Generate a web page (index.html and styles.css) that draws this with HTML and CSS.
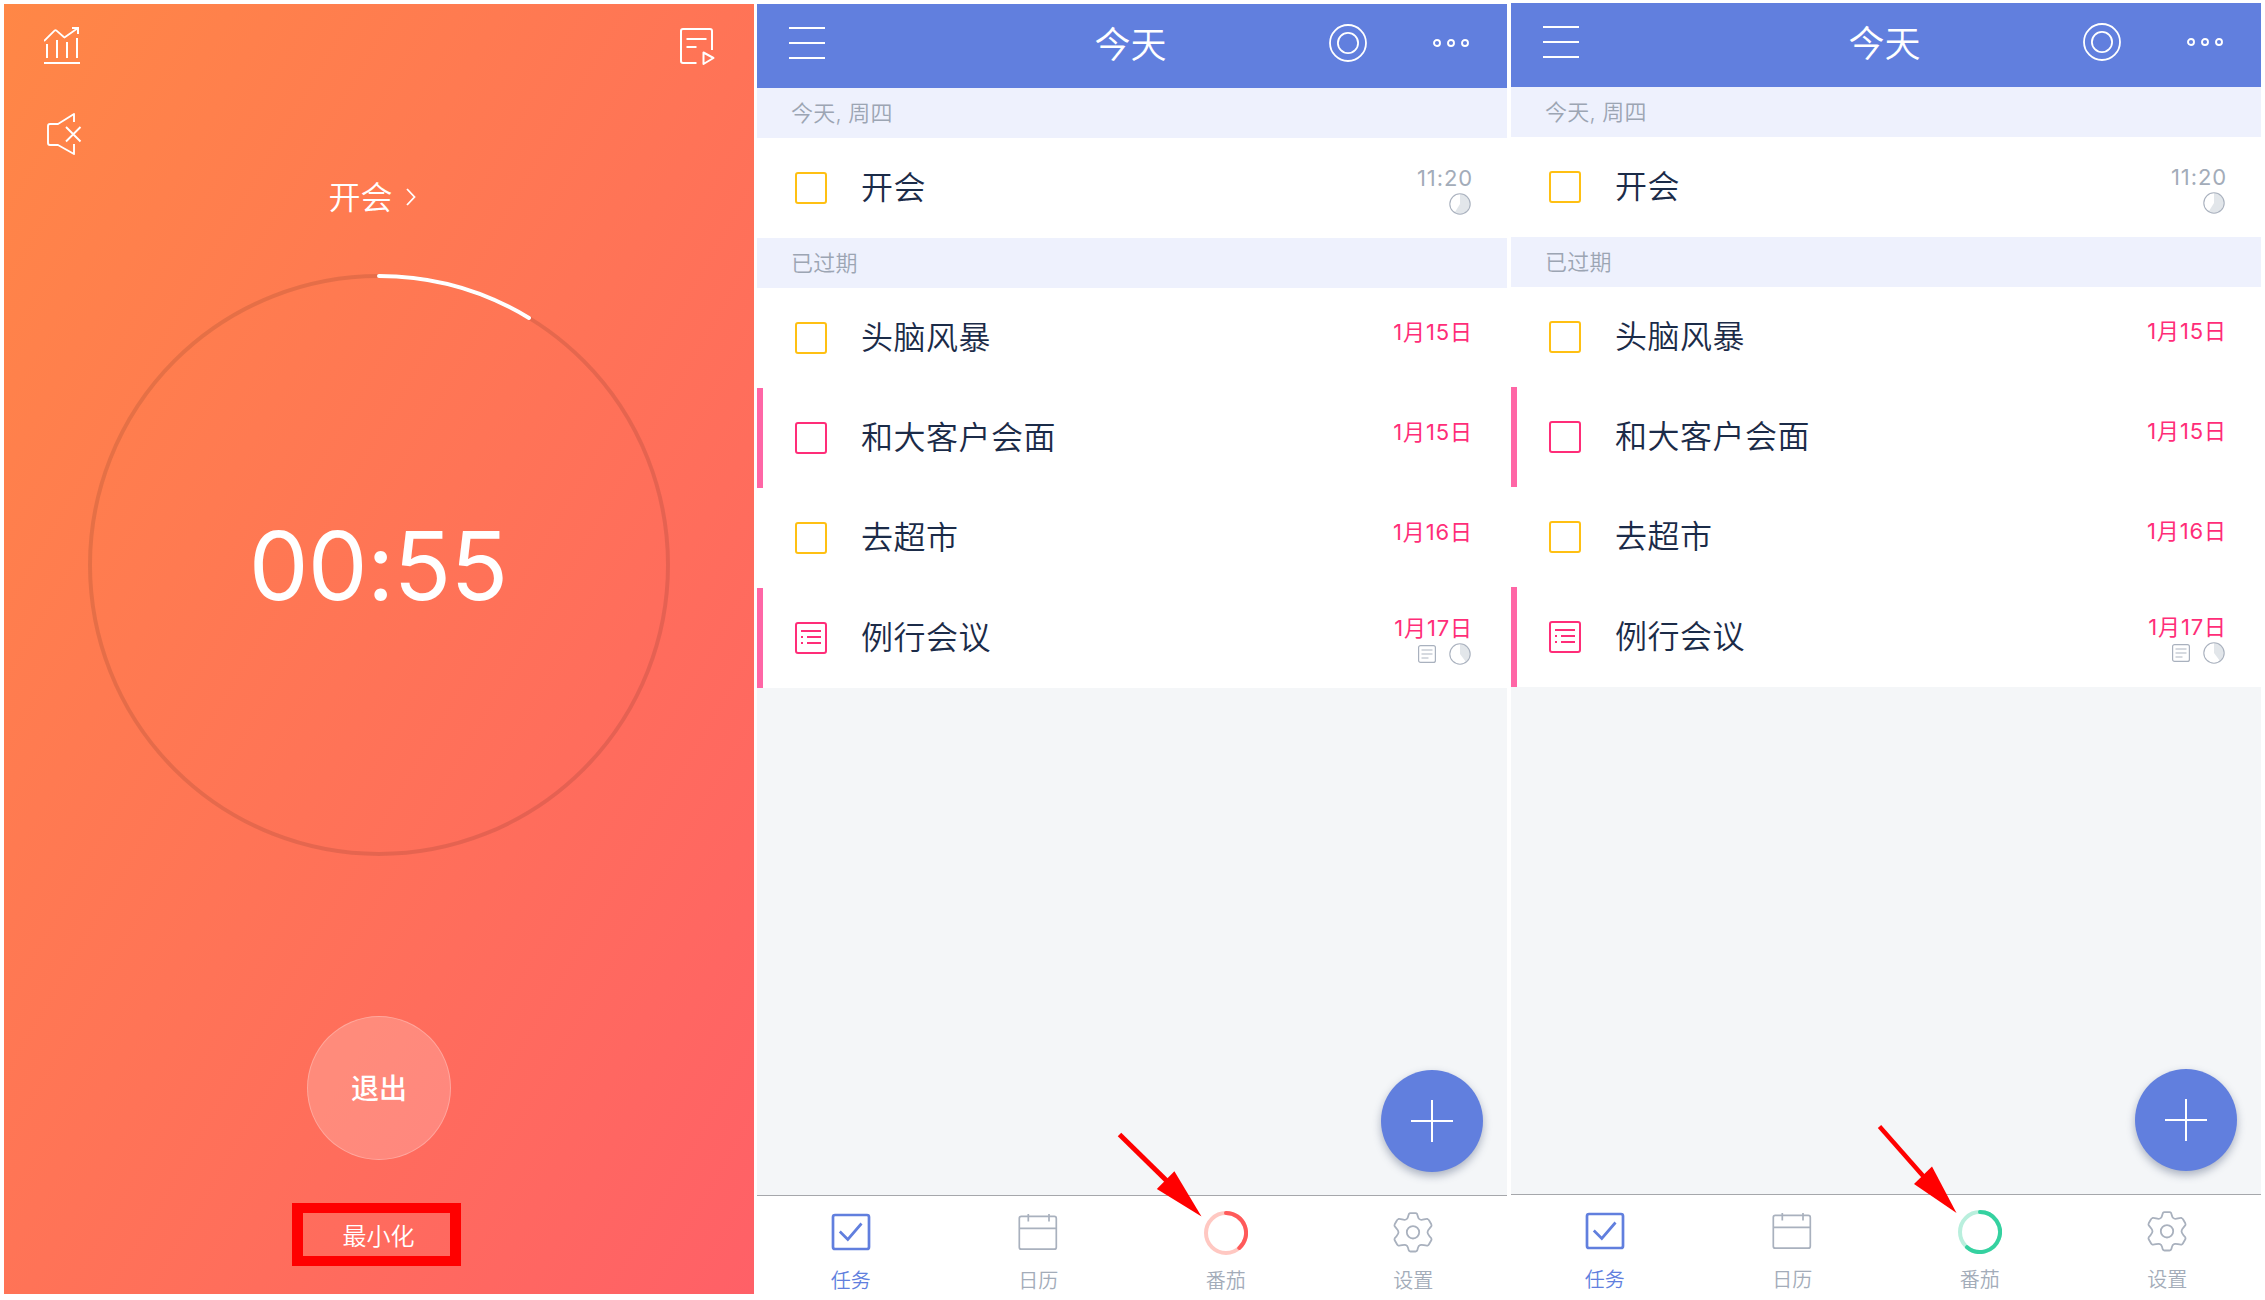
FILE: index.html
```html
<!DOCTYPE html>
<html lang="zh-CN">
<head>
<meta charset="utf-8">
<title>今天</title>
<link rel="stylesheet" href="styles.css">
</head>
<body>
<svg class="defs" width="0" height="0">
  <defs>
    <symbol id="menu" viewBox="0 0 36 32"><path d="M0 1h36M0 16h36M0 31h36" stroke="#fff" stroke-width="2"/></symbol>
    <symbol id="target" viewBox="0 0 38 38"><g fill="none" stroke="#fff" stroke-width="1.8"><circle cx="19" cy="19" r="18"/><circle cx="19" cy="19" r="10.1"/></g></symbol>
    <symbol id="more" viewBox="0 0 36 8"><g fill="none" stroke="#fff" stroke-width="1.9"><circle cx="4" cy="4" r="3"/><circle cx="18" cy="4" r="3"/><circle cx="32" cy="4" r="3"/></g></symbol>
    <symbol id="pie-60" viewBox="0 0 22 22"><path d="M11 11V1a10 10 0 1 1-5.3 18.5z" fill="#e2e6ea"/><circle cx="11" cy="11" r="10.2" fill="none" stroke="#a9b1be" stroke-width="1.1"/></symbol>
    <symbol id="pie-40" viewBox="0 0 22 22"><path d="M11 11V1a10 10 0 0 1 6 18z" fill="#e2e6ea"/><circle cx="11" cy="11" r="10.2" fill="none" stroke="#a9b1be" stroke-width="1.1"/></symbol>
    <symbol id="note" viewBox="0 0 18 18"><rect x=".6" y=".6" width="16.8" height="16.8" rx="2" fill="none" stroke="#a9b1be" stroke-width="1.2"/><path d="M3.500 5h11M3.500 9h11M3.500 13h7" stroke="#c9ced6" stroke-width="1.600"/></symbol>
    <symbol id="checklist" viewBox="0 0 32 32"><path d="M6 9h20M6 15h2M12 15h14M6 21h2M12 21h14" stroke="#ff2d78" stroke-width="2"/></symbol>
    <symbol id="plus" viewBox="0 0 42 42"><path d="M21 0v42M0 21h42" stroke="#fff" stroke-width="2"/></symbol>
    <symbol id="task" viewBox="0 0 44 44"><rect x="4" y="4" width="36" height="34" rx="2" fill="none" stroke="#617fde" stroke-width="2.700"/><path d="M10.800 20.500l8 8L32.500 12.500" fill="none" stroke="#617fde" stroke-width="2.700"/></symbol>
    <symbol id="calendar" viewBox="0 0 44 44"><g fill="none" stroke="#a9b1be" stroke-width="1.700"><rect x="3.300" y="5.400" width="37" height="32.800" rx="2"/><path d="M3.300 17.400h37M12.300 3V10.500M33 3V10.500"/></g></symbol>
    <symbol id="gear" viewBox="0 0 44 44"><g transform="translate(0 -.7)" fill="none" stroke="#a9b1be" stroke-width="1.800" stroke-linejoin="round"><circle cx="22" cy="22" r="6.200"/><path d="M18 3.500Q18.500 2.800 19.500 2.800h5Q25.500 2.800 26 3.500C27.500 6.500 26.500 8.500 29 9.200C31.500 10.300 33.500 8.300 36.500 8.700Q37.500 9 38 10L40.300 14Q40.800 15 40.300 16C38.500 18.500 36.500 19.500 36.500 22S38.500 25.500 40.300 28Q40.800 29 40.300 30L38 34Q37.500 35 36.500 35.300C33.500 35.700 31.500 33.700 29 34.800C26.500 35.500 27.500 37.500 26 40.500Q25.500 41.200 24.500 41.200h-5Q18.500 41.200 18 40.500C16.500 37.500 17.500 35.500 15 34.800C12.500 33.700 10.500 35.700 7.500 35.300Q6.500 35 6 34L3.700 30Q3.200 29 3.700 28C5.500 25.500 7.500 24.500 7.500 22S5.500 18.500 3.700 16Q3.200 15 3.700 14L6 10Q6.500 9 7.500 8.700C10.500 8.300 12.500 10.300 15 9.200C17.500 8.500 16.500 6.500 18 3.500Z"/></g></symbol>
  </defs>
</svg>

<main class="board">
  <section class="timer">
    <div class="timer-top">
      <div class="timer-left">
        <svg width="36" height="40" viewBox="0 0 36 40" fill="none" stroke="#fff" stroke-width="2"><path d="M0 37h36M3 18v14M13 14v18M23 16v16M33 12v20M28 2h6v6"/><path d="M0 15L10.500 4.700Q11.500 3.800 12.500 4.700L19.500 10.800 20.500 11.500 21.500 10.800 34 2" stroke-width="1.800"/></svg>
        <svg class="mute" width="36" height="44" viewBox="0 0 36 44" fill="none" stroke="#fff" stroke-width="1.900" stroke-linejoin="round"><path d="M28 10V2L12 12H4Q2 12 2 14V31Q2 33 4 33H12L28 42V32"/><path d="M20 15L34.500 29.500M34.500 15L20 29.500"/></svg>
      </div>
      <svg class="log" width="36" height="38" viewBox="0 0 36 38" fill="none" stroke="#fff" stroke-width="2" stroke-linejoin="round"><path d="M33 23V4Q33 2 31 2H4Q2 2 2 4V34Q2 36 4 36H17.500"/><path d="M7.500 12H27.500M7.500 20H17.500M24.500 25.500V37L34.500 31Z"/></svg>
    </div>
    <div class="timer-task"><span>开会</span><svg width="10" height="18" viewBox="0 0 10 18" fill="none" stroke="#fff" stroke-width="1.800"><path d="M1 1l7.500 8L1 17"/></svg></div>
    <div class="dial">
      <svg width="582" height="582" viewBox="0 0 582 582" fill="none"><circle cx="291" cy="291" r="289" stroke="#000" stroke-opacity=".1" stroke-width="4"/><path d="M291 2A289 289 0 0 1 441 44" stroke="#fff" stroke-width="4" stroke-linecap="round"/></svg>
      <span class="clock">00:55</span>
    </div>
    <div class="quit">退出</div>
    <div class="minimize">最小化</div>
  </section>

  <section class="phone">
    <header class="bar"><svg width="36" height="32"><use href="#menu"/></svg><h1>今天</h1><div class="actions"><svg width="38" height="38"><use href="#target"/></svg><svg width="36" height="8"><use href="#more"/></svg></div></header>
    <div class="group">今天, 周四</div>
    <div class="row"><i class="box"></i><span class="name">开会</span><div class="meta time"><span>11:20</span><div class="marks"><svg width="22" height="22"><use href="#pie-60"/></svg></div></div></div>
    <div class="group">已过期</div>
    <div class="row"><i class="box"></i><span class="name">头脑风暴</span><div class="meta"><span>1月15日</span></div></div>
    <div class="row marked"><i class="box high"></i><span class="name">和大客户会面</span><div class="meta"><span>1月15日</span></div></div>
    <div class="row"><i class="box"></i><span class="name">去超市</span><div class="meta"><span>1月16日</span></div></div>
    <div class="row marked"><i class="box high"><svg width="32" height="32"><use href="#checklist"/></svg></i><span class="name">例行会议</span><div class="meta with-marks"><span>1月17日</span><div class="marks"><svg width="18" height="18"><use href="#note"/></svg><svg width="22" height="22"><use href="#pie-40"/></svg></div></div></div>
    <div class="rest"></div>
    <nav class="tabs">
      <div class="tab active"><svg width="44" height="44"><use href="#task"/></svg><span>任务</span></div>
      <div class="tab"><svg width="44" height="44"><use href="#calendar"/></svg><span>日历</span></div>
      <div class="tab"><svg width="44" height="44" viewBox="0 0 44 44" fill="none" stroke-width="4"><circle cx="22" cy="22" r="20" stroke="#ffc8c2"/><path d="M22 2A20 20 0 0 1 35.300 37" stroke="#ff5a5a" stroke-linecap="round"/></svg><span>番茄</span></div>
      <div class="tab"><svg width="44" height="44"><use href="#gear"/></svg><span>设置</span></div>
    </nav>
    <div class="add"><svg width="42" height="42"><use href="#plus"/></svg></div>
    <svg class="arrow" width="86" height="86" viewBox="0 0 86 86"><path d="M2.500 2.500L53 52" stroke="#f00" stroke-width="5"/><path d="M84.500 84.500L57.400 39.300 39.800 57z" fill="#f00"/></svg>
  </section>

  <section class="phone raised">
    <header class="bar"><svg width="36" height="32"><use href="#menu"/></svg><h1>今天</h1><div class="actions"><svg width="38" height="38"><use href="#target"/></svg><svg width="36" height="8"><use href="#more"/></svg></div></header>
    <div class="group">今天, 周四</div>
    <div class="row"><i class="box"></i><span class="name">开会</span><div class="meta time"><span>11:20</span><div class="marks"><svg width="22" height="22"><use href="#pie-60"/></svg></div></div></div>
    <div class="group">已过期</div>
    <div class="row"><i class="box"></i><span class="name">头脑风暴</span><div class="meta"><span>1月15日</span></div></div>
    <div class="row marked"><i class="box high"></i><span class="name">和大客户会面</span><div class="meta"><span>1月15日</span></div></div>
    <div class="row"><i class="box"></i><span class="name">去超市</span><div class="meta"><span>1月16日</span></div></div>
    <div class="row marked"><i class="box high"><svg width="32" height="32"><use href="#checklist"/></svg></i><span class="name">例行会议</span><div class="meta with-marks"><span>1月17日</span><div class="marks"><svg width="18" height="18"><use href="#note"/></svg><svg width="22" height="22"><use href="#pie-40"/></svg></div></div></div>
    <div class="rest"></div>
    <nav class="tabs">
      <div class="tab active"><svg width="44" height="44"><use href="#task"/></svg><span>任务</span></div>
      <div class="tab"><svg width="44" height="44"><use href="#calendar"/></svg><span>日历</span></div>
      <div class="tab"><svg width="44" height="44" viewBox="0 0 44 44" fill="none" stroke-width="4"><circle cx="22" cy="22" r="20" stroke="#b9efdd"/><path d="M22 2A20 20 0 1 1 9 37.200" stroke="#35d1a0" stroke-linecap="round"/></svg><span>番茄</span></div>
      <div class="tab"><svg width="44" height="44"><use href="#gear"/></svg><span>设置</span></div>
    </nav>
    <div class="add"><svg width="42" height="42"><use href="#plus"/></svg></div>
    <svg class="arrow arrow-done" width="80" height="90" viewBox="0 0 80 90"><path d="M2.500 2.500L47 53" stroke="#f00" stroke-width="4.500"/><path d="M79.500 89L55 42.500 37 60z" fill="#f00"/></svg>
  </section>
</main>
</body>
</html>
```
FILE: styles.css
```css
* { box-sizing: border-box; }
body {
  margin: 0;
  background: #fff;
  font-family: Inter, "Noto Sans CJK SC", sans-serif;
}
svg { display: block; flex: none; }
.defs { position: absolute; }
.board { display: flex; align-items: flex-start; width: 2265px; height: 1300px; padding: 4px 0 0 4px; overflow: hidden; }

/* focus timer */
.timer {
  display: flex; flex-direction: column; align-items: center;
  width: 750px; height: 1290px; margin-right: 3px;
  background: linear-gradient(to bottom right, #ff8746, #ff6067);
  color: #fff;
}
.timer-top { display: flex; justify-content: space-between; align-self: stretch; height: 167px; padding: 22px 39px 0 40px; }
.mute { margin: 46px 0 0 2px; }
.log { margin-top: 1px; }
.timer-task { display: flex; align-items: center; gap: 13px; height: 48px; margin-right: 14px; font-weight: 350; font-size: 32px; line-height: 48px; }
.timer-task span { font-family: "Noto Sans CJK SC", sans-serif; }
.timer-task svg { margin-top: 4px; }
.dial { display: grid; place-items: center; margin-top: 55px; }
.dial > * { grid-area: 1 / 1; }
.clock { padding: 1px 2px 0 0; font-weight: 370; font-size: 95px; line-height: 110px; letter-spacing: -.8px; }
.quit {
  display: flex; align-items: center; justify-content: center;
  width: 144px; height: 144px; margin-top: 160px; padding-bottom: 2px;
  border: 1px solid rgba(255, 255, 255, .25); border-radius: 50%;
  background: rgba(255, 255, 255, .2);
  font-weight: 500; font-size: 28px;
}
.minimize {
  display: flex; align-items: center; justify-content: center;
  width: 169px; height: 63px; margin: 43px 5px 0 0; padding-left: 4px;
  border: 11px solid #f00; border-top-width: 10px; border-bottom-width: 10px;
  font-weight: 350; font-size: 24px;
}

/* task list */
.phone { position: relative; display: flex; flex-direction: column; width: 750px; height: 1290px; margin-right: 4px; background: #fff; }
.raised { margin: -1px 0 0; }
.bar { display: grid; grid-template-columns: 1fr auto 1fr; align-items: center; height: 84px; padding: 0 38px 6px 32px; background: #617fde; color: #fff; }
.bar h1 { margin: 0; padding: 3px 0 0 3px; font-weight: 350; font-size: 36px; line-height: 50px; }
.actions { display: flex; align-items: center; justify-content: flex-end; gap: 66px; }
.group { height: 50px; padding-left: 34px; background: #eef1fd; color: #9ca5b3; font-weight: 350; font-size: 22px; line-height: 50px; letter-spacing: .2px; }
.row { display: flex; height: 100px; padding: 0 36px 0 38px; }
.marked { box-shadow: inset 6px 0 #ff66a6; }
.box { width: 32px; height: 32px; margin-top: 34px; border: 2px solid #ffc013; border-radius: 3px; }
.high { border-color: #ff2d78; }
.box svg { margin: -2px; }
.name { flex: 1; margin-left: 34px; color: #1b2b48; font-weight: 350; font-size: 32px; line-height: 100px; letter-spacing: .5px; }
.meta { display: flex; flex-direction: column; align-items: flex-end; padding-top: 30px; color: #ff2d78; font-weight: 375; font-size: 22px; line-height: 28px; letter-spacing: .9px; }
.meta > span { margin-right: -2px; }
.time { color: #a3acb9; padding-top: 26px; }
.with-marks { padding-top: 26px; }
.marks { display: flex; align-items: center; gap: 13px; margin-top: 1px; }
.rest { flex: 1; background: #f4f6f8; }
.tabs { display: flex; height: 99px; border-top: 1px solid #a5a7ab; background: #fff; }
.tab { flex: 1; display: flex; flex-direction: column; align-items: center; padding-top: 15px; color: #a3acb9; font-weight: 350; font-size: 20px; line-height: 28px; }
.tab span { margin-top: 12px; }
.active { color: #617fde; }
.add {
  position: absolute; right: 24px; bottom: 122px;
  display: flex; align-items: center; justify-content: center;
  width: 102px; height: 102px; border-radius: 50%;
  background: #617fde; box-shadow: 0 4px 8px rgba(60, 75, 110, .4);
}
.arrow { position: absolute; left: 360px; top: 1128px; }
.arrow-done { left: 366px; top: 1121px; }
```
